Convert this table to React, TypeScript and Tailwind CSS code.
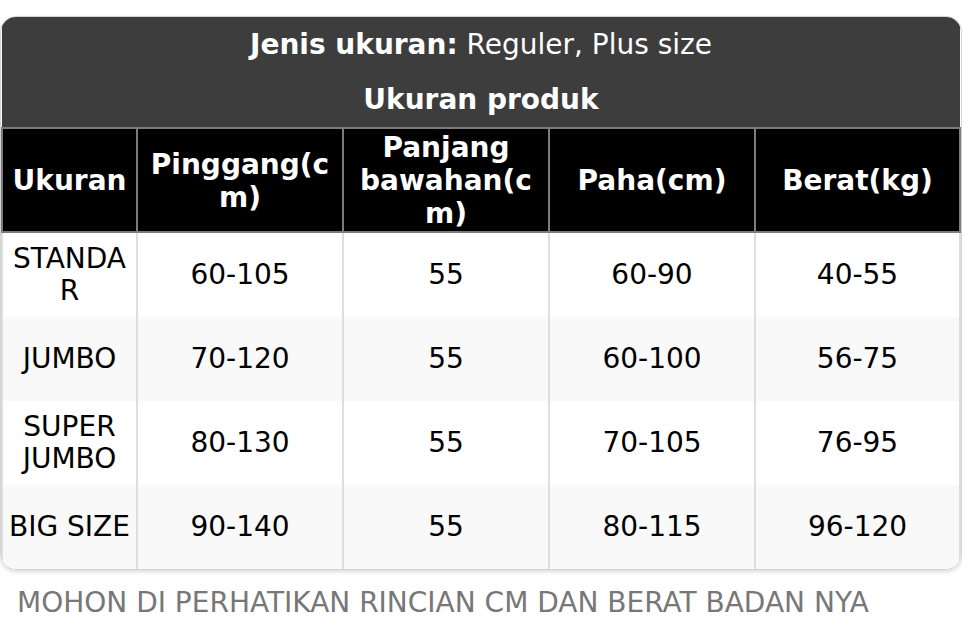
const rows = [
  ["STANDAR", "60-105", "55", "60-90", "40-55"],
  ["JUMBO", "70-120", "55", "60-100", "56-75"],
  ["SUPER JUMBO", "80-130", "55", "70-105", "76-95"],
  ["BIG SIZE", "90-140", "55", "80-115", "96-120"],
];

const heads = ["Ukuran", "Pinggang(cm)", "Panjang bawahan(cm)", "Paha(cm)", "Berat(kg)"];

export default function App() {
  return (
    <div className="w-[962px] bg-white font-['DejaVu_Sans',sans-serif] pt-4">
      <div className="overflow-hidden rounded-2xl border border-[#d4d4d4] shadow-[0_2px_4px_rgba(0,0,0,0.15)]">
        <table className="w-full table-fixed border-collapse text-[28px] leading-[32px]">
          <colgroup>
            <col className="w-[135px]" />
            <col className="w-[206px]" />
            <col className="w-[206px]" />
            <col className="w-[206px]" />
            <col />
          </colgroup>
          <thead>
            <tr className="bg-[#3d3d3d] text-white">
              <th colSpan={5} className="h-[55px] text-center font-normal">
                <span className="font-bold">Jenis ukuran:</span> Reguler, Plus size
              </th>
            </tr>
            <tr className="bg-[#3d3d3d] text-white">
              <th colSpan={5} className="h-[56px] text-center font-bold">
                Ukuran produk
              </th>
            </tr>
            <tr className="bg-black text-white">
              {heads.map((h) => (
                <th
                  key={h}
                  className="h-[104px] border-2 border-[#7c7c7c] px-[5px] pt-[1px] text-center font-bold leading-[33px] break-words"
                >
                  {h}
                </th>
              ))}
            </tr>
          </thead>
          <tbody>
            {rows.map((r, i) => (
              <tr key={r[0]} className={i % 2 === 0 ? "bg-white" : "bg-[#f9f9f9]"}>
                {r.map((c, j) => (
                  <td
                    key={j}
                    className="h-[84px] border-x-2 border-[#dedede] px-[6px] py-[10px] text-center text-black break-words"
                  >
                    {c}
                  </td>
                ))}
              </tr>
            ))}
          </tbody>
        </table>
      </div>
      <p className="mt-[16px] px-[17px] text-[28px] leading-[34px] text-[#777777]">
        MOHON DI PERHATIKAN RINCIAN CM DAN BERAT BADAN NYA
      </p>
    </div>
  );
}
